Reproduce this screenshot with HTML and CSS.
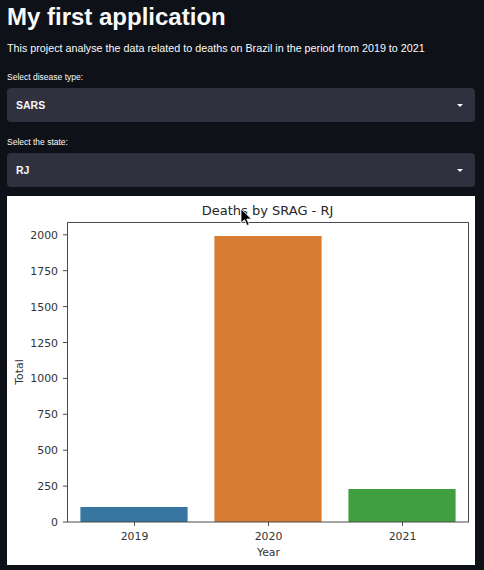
FILE: index.html
```html
<!DOCTYPE html>
<html>
<head>
<meta charset="utf-8">
<link rel="stylesheet" href="styles.css">
</head>
<body>
<main class="main">
  <h1 class="title">My first application</h1>
  <p class="subtitle">This project analyse the data related to deaths on Brazil in the period from 2019 to 2021</p>

  <div class="field">
    <label class="label">Select disease type:</label>
    <div class="select">
      <span class="select-value">SARS</span>
      <span class="caret"></span>
    </div>
  </div>

  <div class="field">
    <label class="label">Select the state:</label>
    <div class="select">
      <span class="select-value">RJ</span>
      <span class="caret"></span>
    </div>
  </div>

  <div class="chart">
    <svg class="chart-svg" width="468" height="369" viewBox="0 0 468 369">
      <text class="chart-title" x="260.5" y="19" text-anchor="middle">Deaths by SRAG - RJ</text>
      <!-- bars -->
      <rect x="73.4" y="311" width="107.2" height="15" fill="#3676a0"/>
      <rect x="207.4" y="40" width="107.2" height="286" fill="#d67c33"/>
      <rect x="341.4" y="293" width="107.2" height="33" fill="#40a03f"/>
      <!-- spines -->
      <rect x="60.5" y="26.5" width="401" height="299.5" fill="none" stroke="#4a4a4a" stroke-width="1"/>
      <!-- ticks -->
      <g stroke="#4a4a4a" stroke-width="1">
        <line x1="56" y1="326" x2="60" y2="326"/>
        <line x1="56" y1="290.1" x2="60" y2="290.1"/>
        <line x1="56" y1="254.2" x2="60" y2="254.2"/>
        <line x1="56" y1="218.3" x2="60" y2="218.3"/>
        <line x1="56" y1="182.4" x2="60" y2="182.4"/>
        <line x1="56" y1="146.5" x2="60" y2="146.5"/>
        <line x1="56" y1="110.6" x2="60" y2="110.6"/>
        <line x1="56" y1="74.7" x2="60" y2="74.7"/>
        <line x1="56" y1="38.8" x2="60" y2="38.8"/>
        <line x1="127.5" y1="326" x2="127.5" y2="330"/>
        <line x1="261.5" y1="326" x2="261.5" y2="330"/>
        <line x1="395.5" y1="326" x2="395.5" y2="330"/>
      </g>
      <g class="tick" text-anchor="end">
        <text x="51" y="330">0</text>
        <text x="51" y="294.1">250</text>
        <text x="51" y="258.2">500</text>
        <text x="51" y="222.3">750</text>
        <text x="51" y="186.4">1000</text>
        <text x="51" y="150.5">1250</text>
        <text x="51" y="114.6">1500</text>
        <text x="51" y="78.7">1750</text>
        <text x="51" y="42.8">2000</text>
      </g>
      <g class="tick" text-anchor="middle">
        <text x="127.5" y="344">2019</text>
        <text x="261.5" y="344">2020</text>
        <text x="395.5" y="344">2021</text>
        <text x="261.5" y="360">Year</text>
        <text x="16" y="176" transform="rotate(-90 16 176)">Total</text>
      </g>
    </svg>
    <svg class="cursor" width="13" height="19" viewBox="0 0 13 19">
      <path d="M1 1 L1 15 L4.5 11.8 L7 17.5 L9.2 16.5 L6.8 11 L11.5 11 Z" fill="#000" stroke="#fff" stroke-width="0.8" stroke-linejoin="round"/>
    </svg>
  </div>
</main>
</body>
</html>
```
FILE: styles.css
```css
html, body {
  margin: 0;
  padding: 0;
  background: #0e1117;
}

body {
  font-family: "Liberation Sans", Arial, sans-serif;
  color: #fafafa;
  overflow: hidden;
}

.main {
  width: 468px;
  margin-left: 7px;
  display: flex;
  flex-direction: column;
}

.title {
  margin: 3px 0 0;
  font-size: 24px;
  line-height: 28px;
  font-weight: 700;
  color: #fafafa;
}

.subtitle {
  margin: 10px 0 0;
  font-size: 10.75px;
  line-height: 14px;
}

.field {
  display: flex;
  flex-direction: column;
  margin-top: 16px;
}

.field + .field {
  margin-top: 14px;
}

.label {
  font-size: 8.5px;
  line-height: 12px;
  margin-bottom: 5px;
}

.select {
  height: 34px;
  background: #30313e;
  border-radius: 4px;
  display: flex;
  align-items: center;
  justify-content: space-between;
  padding: 0 12px 0 9px;
  box-sizing: border-box;
}

.select-value {
  font-size: 10.5px;
  font-weight: 700;
}

.caret {
  width: 0;
  height: 0;
  border-left: 3px solid transparent;
  border-right: 3px solid transparent;
  border-top: 3px solid #fafafa;
}

.chart {
  position: relative;
  margin-top: 9px;
  width: 468px;
  height: 369px;
  background: #ffffff;
}

.chart-svg {
  display: block;
}

.chart-title {
  font-family: "DejaVu Sans", sans-serif;
  font-size: 13px;
  fill: #262626;
}

.tick text {
  font-family: "DejaVu Sans", sans-serif;
  font-size: 10.9px;
  fill: #333333;
}

.cursor {
  position: absolute;
  left: 233px;
  top: 12px;
}
```
